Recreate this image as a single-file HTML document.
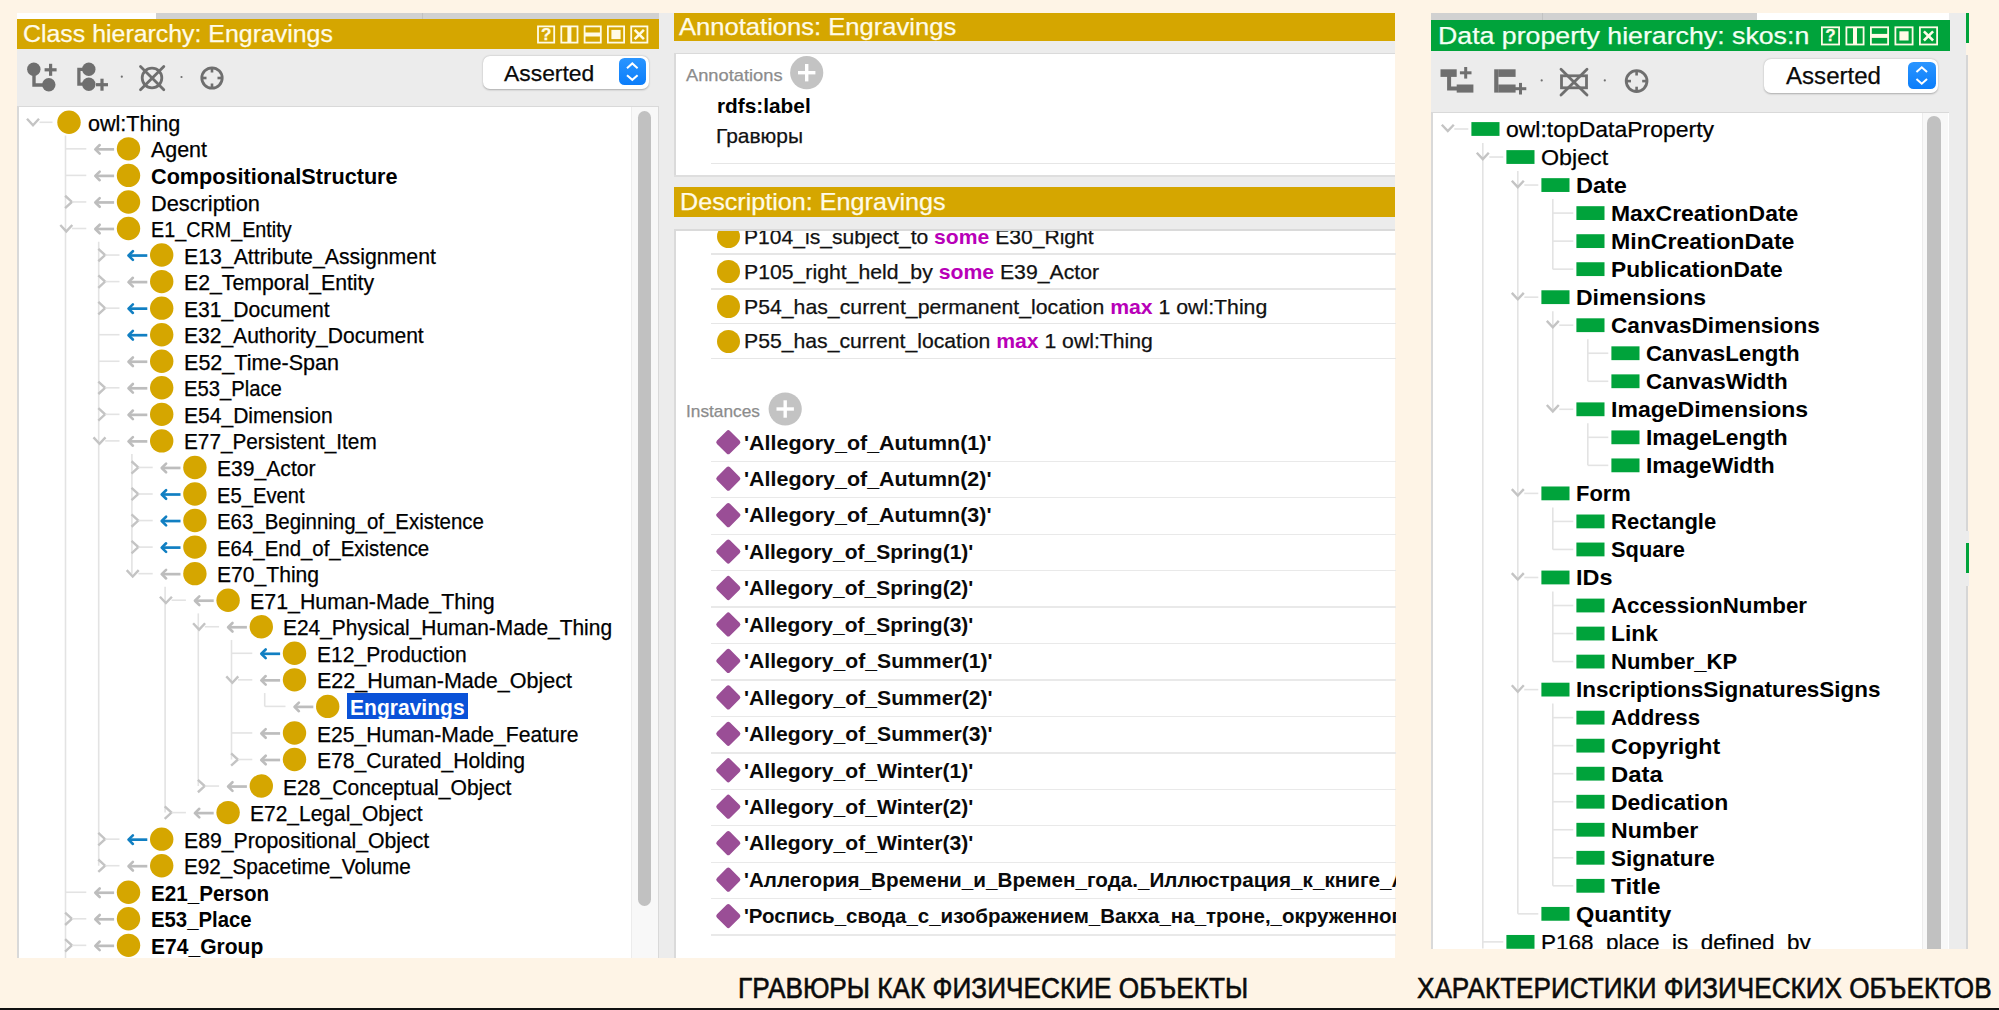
<!DOCTYPE html>
<html><head><meta charset="utf-8"><style>
html,body{margin:0;padding:0;}
body{width:1999px;height:1010px;overflow:hidden;background:#fef4e6;position:relative;font-family:"Liberation Sans",sans-serif;}
.a{position:absolute;}
.t{position:absolute;white-space:nowrap;transform-origin:0 0;line-height:1;-webkit-text-stroke:0.25px currentColor;}
svg{position:absolute;left:0;top:0;}
</style></head><body>
<div class="a" style="left:17.30px;top:13.00px;width:657.20px;height:945.00px;background:#ececec;"></div>
<div class="a" style="left:17.30px;top:13.00px;width:138.90px;height:6.30px;background:#ffffff;"></div>
<div class="a" style="left:156.20px;top:13.00px;width:502.40px;height:6.30px;background:#d1d1d1;"></div>
<div class="a" style="left:421.50px;top:13.00px;width:1.00px;height:6.30px;background:#c2c2c2;"></div>
<div class="a" style="left:17.30px;top:19.30px;width:641.30px;height:30.00px;background:#d5a600;"></div>
<div class="t" style="left:23.00px;top:21.85px;font-size:24.4px;color:#fffbe8;transform:scaleX(1.0206);">Class hierarchy: Engravings</div>
<div class="a" style="left:17.30px;top:106.00px;width:641.30px;height:852.00px;background:#d9d9d9;"></div>
<div class="a" style="left:18.70px;top:107.20px;width:639.50px;height:850.80px;background:#ffffff;"></div>
<div class="a" style="left:631.00px;top:107.20px;width:27.20px;height:850.80px;background:#f8f8f8;"></div>
<div class="a" style="left:631.00px;top:107.20px;width:1.00px;height:850.80px;background:#ececec;"></div>
<div class="a" style="left:637.60px;top:110.80px;width:13.10px;height:795.20px;background:#c1c1c1;border-radius:6.5px;"></div>
<div class="a" style="left:658.60px;top:12.75px;width:736.60px;height:945.25px;background:#ececec;"></div>
<div class="a" style="left:674.00px;top:12.75px;width:721.20px;height:28.00px;background:#d5a600;"></div>
<div class="t" style="left:678.75px;top:14.98px;font-size:24px;color:#fffbe8;transform:scaleX(1.0657);">Annotations: Engravings</div>
<div class="a" style="left:674.00px;top:53.00px;width:721.20px;height:123.30px;background:#dadada;"></div>
<div class="a" style="left:675.50px;top:54.30px;width:719.70px;height:122.00px;background:#ffffff;"></div>
<div class="a" style="left:674.00px;top:187.20px;width:721.20px;height:29.40px;background:#d5a600;"></div>
<div class="t" style="left:680.30px;top:189.88px;font-size:24px;color:#fffbe8;transform:scaleX(1.0480);">Description: Engravings</div>
<div class="a" style="left:674.00px;top:175.00px;width:721.20px;height:1.50px;background:#dedede;"></div>
<div class="a" style="left:674.00px;top:229.30px;width:721.20px;height:728.70px;background:#dadada;"></div>
<div class="a" style="left:675.50px;top:230.50px;width:719.70px;height:727.50px;background:#ffffff;"></div>
<div class="a" style="left:1431.20px;top:13.00px;width:535.30px;height:935.60px;background:#ececec;"></div>
<div class="a" style="left:1431.20px;top:13.20px;width:325.80px;height:6.90px;background:#d1d1d1;"></div>
<div class="a" style="left:1542.00px;top:13.20px;width:1.00px;height:6.90px;background:#c2c2c2;"></div>
<div class="a" style="left:1757.00px;top:13.20px;width:191.80px;height:6.90px;background:#ffffff;"></div>
<div class="a" style="left:1431.20px;top:20.10px;width:518.50px;height:31.40px;background:#00a33b;"></div>
<div class="t" style="left:1438.00px;top:23.83px;font-size:24.3px;color:#f4fff4;transform:scaleX(1.0997);">Data property hierarchy: skos:n</div>
<div class="a" style="left:1431.20px;top:112.00px;width:517.80px;height:836.60px;background:#d9d9d9;"></div>
<div class="a" style="left:1433.00px;top:113.20px;width:516.00px;height:835.40px;background:#ffffff;"></div>
<div class="a" style="left:1921.60px;top:113.20px;width:26.80px;height:835.40px;background:#f8f8f8;"></div>
<div class="a" style="left:1921.60px;top:113.20px;width:1.00px;height:835.40px;background:#ececec;"></div>
<div class="a" style="left:1927.30px;top:116.00px;width:14.20px;height:832.60px;background:#c1c1c1;border-radius:7px 7px 0 0;"></div>
<div class="a" style="left:1966.00px;top:55.00px;width:1.50px;height:893.60px;background:#d6d6d6;"></div>
<div class="a" style="left:1965.60px;top:13.00px;width:3.40px;height:30.00px;background:#00a33b;"></div>
<div class="a" style="left:1966.00px;top:530.70px;width:3.00px;height:55.50px;background:#ececec;"></div>
<div class="a" style="left:1966.00px;top:542.60px;width:3.00px;height:30.90px;background:#00a33b;"></div>
<div class="t" style="left:87.70px;top:112.85px;font-size:21.2px;color:#000;transform:scaleX(1.0173);">owl:Thing</div>
<div class="t" style="left:150.50px;top:139.40px;font-size:21.2px;color:#000;transform:scaleX(1.0109);">Agent</div>
<div class="t" style="left:150.50px;top:165.95px;font-size:21.2px;color:#000;font-weight:bold;-webkit-text-stroke:0;transform:scaleX(1.0218);">CompositionalStructure</div>
<div class="t" style="left:150.50px;top:192.50px;font-size:21.2px;color:#000;transform:scaleX(1.0279);">Description</div>
<div class="t" style="left:150.50px;top:219.05px;font-size:21.2px;color:#000;transform:scaleX(0.9330);">E1_CRM_Entity</div>
<div class="t" style="left:183.70px;top:245.60px;font-size:21.2px;color:#000;transform:scaleX(1.0040);">E13_Attribute_Assignment</div>
<div class="t" style="left:183.70px;top:272.15px;font-size:21.2px;color:#000;transform:scaleX(1.0026);">E2_Temporal_Entity</div>
<div class="t" style="left:183.70px;top:298.70px;font-size:21.2px;color:#000;transform:scaleX(0.9971);">E31_Document</div>
<div class="t" style="left:183.70px;top:325.25px;font-size:21.2px;color:#000;transform:scaleX(0.9927);">E32_Authority_Document</div>
<div class="t" style="left:183.70px;top:351.80px;font-size:21.2px;color:#000;transform:scaleX(1.0177);">E52_Time-Span</div>
<div class="t" style="left:183.70px;top:378.35px;font-size:21.2px;color:#000;transform:scaleX(0.9548);">E53_Place</div>
<div class="t" style="left:183.70px;top:404.90px;font-size:21.2px;color:#000;transform:scaleX(0.9936);">E54_Dimension</div>
<div class="t" style="left:183.70px;top:431.45px;font-size:21.2px;color:#000;transform:scaleX(0.9798);">E77_Persistent_Item</div>
<div class="t" style="left:216.90px;top:458.00px;font-size:21.2px;color:#000;transform:scaleX(0.9961);">E39_Actor</div>
<div class="t" style="left:216.90px;top:484.55px;font-size:21.2px;color:#000;transform:scaleX(0.9529);">E5_Event</div>
<div class="t" style="left:216.90px;top:511.10px;font-size:21.2px;color:#000;transform:scaleX(0.9640);">E63_Beginning_of_Existence</div>
<div class="t" style="left:216.90px;top:537.65px;font-size:21.2px;color:#000;transform:scaleX(0.9633);">E64_End_of_Existence</div>
<div class="t" style="left:216.90px;top:564.20px;font-size:21.2px;color:#000;transform:scaleX(0.9958);">E70_Thing</div>
<div class="t" style="left:250.10px;top:590.75px;font-size:21.2px;color:#000;transform:scaleX(1.0085);">E71_Human-Made_Thing</div>
<div class="t" style="left:283.30px;top:617.30px;font-size:21.2px;color:#000;transform:scaleX(0.9872);">E24_Physical_Human-Made_Thing</div>
<div class="t" style="left:316.50px;top:643.85px;font-size:21.2px;color:#000;transform:scaleX(0.9930);">E12_Production</div>
<div class="t" style="left:316.50px;top:670.40px;font-size:21.2px;color:#000;transform:scaleX(1.0164);">E22_Human-Made_Object</div>
<div class="a" style="left:346.60px;top:693.00px;width:121.60px;height:26.00px;background:#0a52d8;"></div>
<div class="t" style="left:349.50px;top:696.95px;font-size:21.2px;color:#ffffff;font-weight:bold;-webkit-text-stroke:0;transform:scaleX(0.9936);">Engravings</div>
<div class="t" style="left:316.50px;top:723.50px;font-size:21.2px;color:#000;transform:scaleX(0.9959);">E25_Human-Made_Feature</div>
<div class="t" style="left:316.50px;top:750.05px;font-size:21.2px;color:#000;transform:scaleX(0.9971);">E78_Curated_Holding</div>
<div class="t" style="left:283.30px;top:776.60px;font-size:21.2px;color:#000;transform:scaleX(0.9943);">E28_Conceptual_Object</div>
<div class="t" style="left:250.10px;top:803.15px;font-size:21.2px;color:#000;transform:scaleX(0.9901);">E72_Legal_Object</div>
<div class="t" style="left:183.70px;top:829.70px;font-size:21.2px;color:#000;transform:scaleX(1.0011);">E89_Propositional_Object</div>
<div class="t" style="left:183.70px;top:856.25px;font-size:21.2px;color:#000;transform:scaleX(0.9778);">E92_Spacetime_Volume</div>
<div class="t" style="left:150.50px;top:882.80px;font-size:21.2px;color:#000;font-weight:bold;-webkit-text-stroke:0;transform:scaleX(0.9738);">E21_Person</div>
<div class="t" style="left:150.50px;top:909.35px;font-size:21.2px;color:#000;font-weight:bold;-webkit-text-stroke:0;transform:scaleX(0.9589);">E53_Place</div>
<div class="t" style="left:150.50px;top:935.90px;font-size:21.2px;color:#000;font-weight:bold;-webkit-text-stroke:0;transform:scaleX(0.9930);">E74_Group</div>
<div class="t" style="left:1505.80px;top:118.85px;font-size:22.5px;color:#000;transform:scaleX(1.0204);">owl:topDataProperty</div>
<div class="t" style="left:1540.80px;top:146.88px;font-size:22.5px;color:#000;transform:scaleX(1.0319);">Object</div>
<div class="t" style="left:1575.80px;top:174.91px;font-size:22.5px;color:#000;font-weight:bold;-webkit-text-stroke:0;transform:scaleX(1.0438);">Date</div>
<div class="t" style="left:1610.80px;top:202.94px;font-size:22.5px;color:#000;font-weight:bold;-webkit-text-stroke:0;transform:scaleX(1.0191);">MaxCreationDate</div>
<div class="t" style="left:1610.80px;top:230.97px;font-size:22.5px;color:#000;font-weight:bold;-webkit-text-stroke:0;transform:scaleX(1.0260);">MinCreationDate</div>
<div class="t" style="left:1610.80px;top:259.00px;font-size:22.5px;color:#000;font-weight:bold;-webkit-text-stroke:0;transform:scaleX(1.0093);">PublicationDate</div>
<div class="t" style="left:1575.80px;top:287.03px;font-size:22.5px;color:#000;font-weight:bold;-webkit-text-stroke:0;transform:scaleX(1.0202);">Dimensions</div>
<div class="t" style="left:1610.80px;top:315.06px;font-size:22.5px;color:#000;font-weight:bold;-webkit-text-stroke:0;transform:scaleX(1.0060);">CanvasDimensions</div>
<div class="t" style="left:1645.80px;top:343.09px;font-size:22.5px;color:#000;font-weight:bold;-webkit-text-stroke:0;transform:scaleX(0.9902);">CanvasLength</div>
<div class="t" style="left:1645.80px;top:371.12px;font-size:22.5px;color:#000;font-weight:bold;-webkit-text-stroke:0;transform:scaleX(0.9957);">CanvasWidth</div>
<div class="t" style="left:1610.80px;top:399.15px;font-size:22.5px;color:#000;font-weight:bold;-webkit-text-stroke:0;transform:scaleX(1.0236);">ImageDimensions</div>
<div class="t" style="left:1645.80px;top:427.18px;font-size:22.5px;color:#000;font-weight:bold;-webkit-text-stroke:0;transform:scaleX(1.0121);">ImageLength</div>
<div class="t" style="left:1645.80px;top:455.21px;font-size:22.5px;color:#000;font-weight:bold;-webkit-text-stroke:0;transform:scaleX(1.0110);">ImageWidth</div>
<div class="t" style="left:1575.80px;top:483.24px;font-size:22.5px;color:#000;font-weight:bold;-webkit-text-stroke:0;transform:scaleX(0.9742);">Form</div>
<div class="t" style="left:1610.80px;top:511.27px;font-size:22.5px;color:#000;font-weight:bold;-webkit-text-stroke:0;transform:scaleX(0.9784);">Rectangle</div>
<div class="t" style="left:1610.80px;top:539.30px;font-size:22.5px;color:#000;font-weight:bold;-webkit-text-stroke:0;transform:scaleX(0.9702);">Square</div>
<div class="t" style="left:1575.80px;top:567.33px;font-size:22.5px;color:#000;font-weight:bold;-webkit-text-stroke:0;transform:scaleX(1.0396);">IDs</div>
<div class="t" style="left:1610.80px;top:595.36px;font-size:22.5px;color:#000;font-weight:bold;-webkit-text-stroke:0;transform:scaleX(0.9921);">AccessionNumber</div>
<div class="t" style="left:1610.80px;top:623.39px;font-size:22.5px;color:#000;font-weight:bold;-webkit-text-stroke:0;transform:scaleX(1.0119);">Link</div>
<div class="t" style="left:1610.80px;top:651.42px;font-size:22.5px;color:#000;font-weight:bold;-webkit-text-stroke:0;transform:scaleX(0.9792);">Number_KP</div>
<div class="t" style="left:1575.80px;top:679.45px;font-size:22.5px;color:#000;font-weight:bold;-webkit-text-stroke:0;transform:scaleX(0.9982);">InscriptionsSignaturesSigns</div>
<div class="t" style="left:1610.80px;top:707.48px;font-size:22.5px;color:#000;font-weight:bold;-webkit-text-stroke:0;transform:scaleX(0.9897);">Address</div>
<div class="t" style="left:1610.80px;top:735.51px;font-size:22.5px;color:#000;font-weight:bold;-webkit-text-stroke:0;transform:scaleX(1.0279);">Copyright</div>
<div class="t" style="left:1610.80px;top:763.54px;font-size:22.5px;color:#000;font-weight:bold;-webkit-text-stroke:0;transform:scaleX(1.0602);">Data</div>
<div class="t" style="left:1610.80px;top:791.57px;font-size:22.5px;color:#000;font-weight:bold;-webkit-text-stroke:0;transform:scaleX(1.0191);">Dedication</div>
<div class="t" style="left:1610.80px;top:819.60px;font-size:22.5px;color:#000;font-weight:bold;-webkit-text-stroke:0;transform:scaleX(1.0269);">Number</div>
<div class="t" style="left:1610.80px;top:847.63px;font-size:22.5px;color:#000;font-weight:bold;-webkit-text-stroke:0;transform:scaleX(1.0004);">Signature</div>
<div class="t" style="left:1610.80px;top:875.66px;font-size:22.5px;color:#000;font-weight:bold;-webkit-text-stroke:0;transform:scaleX(1.0798);">Title</div>
<div class="t" style="left:1575.80px;top:903.69px;font-size:22.5px;color:#000;font-weight:bold;-webkit-text-stroke:0;transform:scaleX(1.0434);">Quantity</div>
<div class="t" style="left:1540.80px;top:931.72px;font-size:22.5px;color:#000;transform:scaleX(0.9978);">P168_place_is_defined_by</div>
<div class="t" style="left:685.70px;top:66.91px;font-size:17px;color:#8c8c8c;transform:scaleX(1.0759);">Annotations</div>
<div class="t" style="left:716.60px;top:95.69px;font-size:20.8px;color:#000;font-weight:bold;-webkit-text-stroke:0;transform:scaleX(1.0009);">rdfs:label</div>
<div class="t" style="left:716.00px;top:125.02px;font-size:21px;color:#111;transform:scaleX(0.9974);">Гравюры</div>
<div class="a" style="left:711.00px;top:162.80px;width:684.20px;height:1.40px;background:#e6e6e6;"></div>
<div class="a" style="left:675.5px;top:230.5px;width:720px;height:727.5px;overflow:hidden">
<div class="a" style="left:41.30px;top:-5.70px;width:23.4px;height:23.4px;border-radius:50%;background:#d5a600"></div>
<div class="t" style="left:68.50px;top:-4.78px;font-size:21px;transform:scaleX(1.0052)"><span style="color:#111;">P104_is_subject_to </span><span style="color:#b800b8;font-weight:bold;-webkit-text-stroke:0;">some</span><span style="color:#111;"> E30_Right</span></div>
<div class="a" style="left:35.50px;top:22.80px;width:720px;height:1.4px;background:#e6e6e6"></div>
<div class="a" style="left:41.30px;top:29.20px;width:23.4px;height:23.4px;border-radius:50%;background:#d5a600"></div>
<div class="t" style="left:68.50px;top:30.12px;font-size:21px;transform:scaleX(1.0103)"><span style="color:#111;">P105_right_held_by </span><span style="color:#b800b8;font-weight:bold;-webkit-text-stroke:0;">some</span><span style="color:#111;"> E39_Actor</span></div>
<div class="a" style="left:35.50px;top:57.70px;width:720px;height:1.4px;background:#e6e6e6"></div>
<div class="a" style="left:41.30px;top:64.10px;width:23.4px;height:23.4px;border-radius:50%;background:#d5a600"></div>
<div class="t" style="left:68.50px;top:65.02px;font-size:21px;transform:scaleX(1.0117)"><span style="color:#111;">P54_has_current_permanent_location </span><span style="color:#b800b8;font-weight:bold;-webkit-text-stroke:0;">max</span><span style="color:#111;"> 1 owl:Thing</span></div>
<div class="a" style="left:35.50px;top:92.60px;width:720px;height:1.4px;background:#e6e6e6"></div>
<div class="a" style="left:41.30px;top:99.00px;width:23.4px;height:23.4px;border-radius:50%;background:#d5a600"></div>
<div class="t" style="left:68.50px;top:99.92px;font-size:21px;transform:scaleX(1.0092)"><span style="color:#111;">P55_has_current_location </span><span style="color:#b800b8;font-weight:bold;-webkit-text-stroke:0;">max</span><span style="color:#111;"> 1 owl:Thing</span></div>
<div class="a" style="left:35.50px;top:127.50px;width:720px;height:1.4px;background:#e6e6e6"></div>
</div>
<div class="t" style="left:686.30px;top:403.41px;font-size:17px;color:#8c8c8c;transform:scaleX(1.0170);">Instances</div>
<div class="a" style="left:675.5px;top:230.5px;width:720px;height:727.5px;overflow:hidden">
<div class="t" style="left:68.50px;top:201.02px;font-size:21px;font-weight:bold;-webkit-text-stroke:0;color:#0a0a0a;transform:scaleX(1.0221)">'Allegory_of_Autumn(1)'</div>
<div class="a" style="left:35.50px;top:230.10px;width:720px;height:1.4px;background:#e9e9e9"></div>
<div class="t" style="left:68.50px;top:237.47px;font-size:21px;font-weight:bold;-webkit-text-stroke:0;color:#0a0a0a;transform:scaleX(1.0221)">'Allegory_of_Autumn(2)'</div>
<div class="a" style="left:35.50px;top:266.55px;width:720px;height:1.4px;background:#e9e9e9"></div>
<div class="t" style="left:68.50px;top:273.92px;font-size:21px;font-weight:bold;-webkit-text-stroke:0;color:#0a0a0a;transform:scaleX(1.0221)">'Allegory_of_Autumn(3)'</div>
<div class="a" style="left:35.50px;top:303.00px;width:720px;height:1.4px;background:#e9e9e9"></div>
<div class="t" style="left:68.50px;top:310.37px;font-size:21px;font-weight:bold;-webkit-text-stroke:0;color:#0a0a0a;transform:scaleX(0.9998)">'Allegory_of_Spring(1)'</div>
<div class="a" style="left:35.50px;top:339.45px;width:720px;height:1.4px;background:#e9e9e9"></div>
<div class="t" style="left:68.50px;top:346.82px;font-size:21px;font-weight:bold;-webkit-text-stroke:0;color:#0a0a0a;transform:scaleX(0.9998)">'Allegory_of_Spring(2)'</div>
<div class="a" style="left:35.50px;top:375.90px;width:720px;height:1.4px;background:#e9e9e9"></div>
<div class="t" style="left:68.50px;top:383.27px;font-size:21px;font-weight:bold;-webkit-text-stroke:0;color:#0a0a0a;transform:scaleX(0.9998)">'Allegory_of_Spring(3)'</div>
<div class="a" style="left:35.50px;top:412.35px;width:720px;height:1.4px;background:#e9e9e9"></div>
<div class="t" style="left:68.50px;top:419.72px;font-size:21px;font-weight:bold;-webkit-text-stroke:0;color:#0a0a0a;transform:scaleX(1.0066)">'Allegory_of_Summer(1)'</div>
<div class="a" style="left:35.50px;top:448.80px;width:720px;height:1.4px;background:#e9e9e9"></div>
<div class="t" style="left:68.50px;top:456.17px;font-size:21px;font-weight:bold;-webkit-text-stroke:0;color:#0a0a0a;transform:scaleX(1.0066)">'Allegory_of_Summer(2)'</div>
<div class="a" style="left:35.50px;top:485.25px;width:720px;height:1.4px;background:#e9e9e9"></div>
<div class="t" style="left:68.50px;top:492.62px;font-size:21px;font-weight:bold;-webkit-text-stroke:0;color:#0a0a0a;transform:scaleX(1.0066)">'Allegory_of_Summer(3)'</div>
<div class="a" style="left:35.50px;top:521.70px;width:720px;height:1.4px;background:#e9e9e9"></div>
<div class="t" style="left:68.50px;top:529.07px;font-size:21px;font-weight:bold;-webkit-text-stroke:0;color:#0a0a0a;transform:scaleX(1.0058)">'Allegory_of_Winter(1)'</div>
<div class="a" style="left:35.50px;top:558.15px;width:720px;height:1.4px;background:#e9e9e9"></div>
<div class="t" style="left:68.50px;top:565.52px;font-size:21px;font-weight:bold;-webkit-text-stroke:0;color:#0a0a0a;transform:scaleX(1.0058)">'Allegory_of_Winter(2)'</div>
<div class="a" style="left:35.50px;top:594.60px;width:720px;height:1.4px;background:#e9e9e9"></div>
<div class="t" style="left:68.50px;top:601.97px;font-size:21px;font-weight:bold;-webkit-text-stroke:0;color:#0a0a0a;transform:scaleX(1.0058)">'Allegory_of_Winter(3)'</div>
<div class="a" style="left:35.50px;top:631.05px;width:720px;height:1.4px;background:#e9e9e9"></div>
<div class="t" style="left:68.50px;top:638.42px;font-size:21px;font-weight:bold;-webkit-text-stroke:0;color:#0a0a0a;transform:scaleX(0.9837)">'Аллегория_Времени_и_Времен_года._Иллюстрация_к_книге_Алле</div>
<div class="a" style="left:35.50px;top:667.50px;width:720px;height:1.4px;background:#e9e9e9"></div>
<div class="t" style="left:68.50px;top:674.87px;font-size:21px;font-weight:bold;-webkit-text-stroke:0;color:#0a0a0a;transform:scaleX(0.9757)">'Роспись_свода_с_изображением_Вакха_на_троне,_окруженного</div>
<div class="a" style="left:35.50px;top:703.95px;width:720px;height:1.4px;background:#e9e9e9"></div>
</div>
<div class="a" style="left:483.4px;top:56.1px;width:165.60000000000002px;height:33.300000000000004px;background:#fff;border-radius:7px;box-shadow:0 0.5px 2px rgba(0,0,0,0.28)"></div>
<div class="a" style="left:619px;top:58.3px;width:26.600000000000023px;height:26.700000000000003px;background:linear-gradient(#2a95ff,#0b7dfa);border-radius:5.5px"></div>
<div class="t" style="left:503.50px;top:62.75px;font-size:22.5px;color:#0a0a0a;transform:scaleX(1.0170);">Asserted</div>
<div class="a" style="left:1764px;top:59.4px;width:174.4000000000001px;height:33.9px;background:#fff;border-radius:7px;box-shadow:0 0.5px 2px rgba(0,0,0,0.28)"></div>
<div class="a" style="left:1908px;top:61.7px;width:27.5px;height:27.5px;background:linear-gradient(#2a95ff,#0b7dfa);border-radius:5.5px"></div>
<div class="t" style="left:1785.50px;top:65.01px;font-size:23.5px;color:#0a0a0a;transform:scaleX(1.0244);">Asserted</div>
<div class="t" style="left:540.90px;top:25.90px;font-size:17px;font-weight:bold;color:#fffbe6">?</div>
<div class="t" style="left:1825.30px;top:27.30px;font-size:17px;font-weight:bold;color:#fffbe6">?</div>
<svg width="1999" height="1010" viewBox="0 0 1999 1010">
<line x1="65.50" y1="135.50" x2="65.50" y2="958.00" stroke="#e3e3e3" stroke-width="1.6"/><line x1="98.70" y1="241.70" x2="98.70" y2="865.70" stroke="#e3e3e3" stroke-width="1.6"/><line x1="131.90" y1="454.10" x2="131.90" y2="573.65" stroke="#e3e3e3" stroke-width="1.6"/><line x1="165.10" y1="586.85" x2="165.10" y2="812.60" stroke="#e3e3e3" stroke-width="1.6"/><line x1="198.30" y1="613.40" x2="198.30" y2="786.05" stroke="#e3e3e3" stroke-width="1.6"/><line x1="231.50" y1="639.95" x2="231.50" y2="759.50" stroke="#e3e3e3" stroke-width="1.6"/><line x1="264.70" y1="693.05" x2="264.70" y2="706.40" stroke="#e3e3e3" stroke-width="1.6"/><polyline points="27.00,118.80 33.00,125.20 39.00,118.80" fill="none" stroke="#c4c4c4" stroke-width="2.4"/><line x1="39.50" y1="122.30" x2="52.50" y2="122.30" stroke="#e3e3e3" stroke-width="1.6"/><circle cx="69.00" cy="122.30" r="11.7" fill="#d5a600"/><line x1="65.50" y1="148.85" x2="86.30" y2="148.85" stroke="#e3e3e3" stroke-width="1.6"/><line x1="95.60" y1="149.35" x2="114.10" y2="149.35" stroke="#bdbdbd" stroke-width="2.7"/><polyline points="99.70,145.05 95.30,149.35 99.70,153.65" fill="none" stroke="#bdbdbd" stroke-width="2.6" stroke-linecap="round" stroke-linejoin="round"/><circle cx="128.50" cy="148.85" r="11.7" fill="#d5a600"/><line x1="65.50" y1="175.40" x2="86.30" y2="175.40" stroke="#e3e3e3" stroke-width="1.6"/><line x1="95.60" y1="175.90" x2="114.10" y2="175.90" stroke="#bdbdbd" stroke-width="2.7"/><polyline points="99.70,171.60 95.30,175.90 99.70,180.20" fill="none" stroke="#bdbdbd" stroke-width="2.6" stroke-linecap="round" stroke-linejoin="round"/><circle cx="128.50" cy="175.40" r="11.7" fill="#d5a600"/><polyline points="65.10,195.75 71.90,201.95 65.10,208.15" fill="none" stroke="#c4c4c4" stroke-width="2.4"/><line x1="72.00" y1="201.95" x2="86.30" y2="201.95" stroke="#e3e3e3" stroke-width="1.6"/><line x1="95.60" y1="202.45" x2="114.10" y2="202.45" stroke="#bdbdbd" stroke-width="2.7"/><polyline points="99.70,198.15 95.30,202.45 99.70,206.75" fill="none" stroke="#bdbdbd" stroke-width="2.6" stroke-linecap="round" stroke-linejoin="round"/><circle cx="128.50" cy="201.95" r="11.7" fill="#d5a600"/><polyline points="60.30,225.00 66.30,231.40 72.30,225.00" fill="none" stroke="#c4c4c4" stroke-width="2.4"/><line x1="72.00" y1="228.50" x2="86.30" y2="228.50" stroke="#e3e3e3" stroke-width="1.6"/><line x1="95.60" y1="229.00" x2="114.10" y2="229.00" stroke="#bdbdbd" stroke-width="2.7"/><polyline points="99.70,224.70 95.30,229.00 99.70,233.30" fill="none" stroke="#bdbdbd" stroke-width="2.6" stroke-linecap="round" stroke-linejoin="round"/><circle cx="128.50" cy="228.50" r="11.7" fill="#d5a600"/><polyline points="98.30,248.85 105.10,255.05 98.30,261.25" fill="none" stroke="#c4c4c4" stroke-width="2.4"/><line x1="105.20" y1="255.05" x2="119.50" y2="255.05" stroke="#e3e3e3" stroke-width="1.6"/><line x1="128.80" y1="255.55" x2="147.30" y2="255.55" stroke="#117fc2" stroke-width="2.7"/><polyline points="132.90,251.25 128.50,255.55 132.90,259.85" fill="none" stroke="#117fc2" stroke-width="2.6" stroke-linecap="round" stroke-linejoin="round"/><circle cx="161.70" cy="255.05" r="11.7" fill="#d5a600"/><polyline points="98.30,275.40 105.10,281.60 98.30,287.80" fill="none" stroke="#c4c4c4" stroke-width="2.4"/><line x1="105.20" y1="281.60" x2="119.50" y2="281.60" stroke="#e3e3e3" stroke-width="1.6"/><line x1="128.80" y1="282.10" x2="147.30" y2="282.10" stroke="#bdbdbd" stroke-width="2.7"/><polyline points="132.90,277.80 128.50,282.10 132.90,286.40" fill="none" stroke="#bdbdbd" stroke-width="2.6" stroke-linecap="round" stroke-linejoin="round"/><circle cx="161.70" cy="281.60" r="11.7" fill="#d5a600"/><polyline points="98.30,301.95 105.10,308.15 98.30,314.35" fill="none" stroke="#c4c4c4" stroke-width="2.4"/><line x1="105.20" y1="308.15" x2="119.50" y2="308.15" stroke="#e3e3e3" stroke-width="1.6"/><line x1="128.80" y1="308.65" x2="147.30" y2="308.65" stroke="#117fc2" stroke-width="2.7"/><polyline points="132.90,304.35 128.50,308.65 132.90,312.95" fill="none" stroke="#117fc2" stroke-width="2.6" stroke-linecap="round" stroke-linejoin="round"/><circle cx="161.70" cy="308.15" r="11.7" fill="#d5a600"/><line x1="98.70" y1="334.70" x2="119.50" y2="334.70" stroke="#e3e3e3" stroke-width="1.6"/><line x1="128.80" y1="335.20" x2="147.30" y2="335.20" stroke="#117fc2" stroke-width="2.7"/><polyline points="132.90,330.90 128.50,335.20 132.90,339.50" fill="none" stroke="#117fc2" stroke-width="2.6" stroke-linecap="round" stroke-linejoin="round"/><circle cx="161.70" cy="334.70" r="11.7" fill="#d5a600"/><line x1="98.70" y1="361.25" x2="119.50" y2="361.25" stroke="#e3e3e3" stroke-width="1.6"/><line x1="128.80" y1="361.75" x2="147.30" y2="361.75" stroke="#bdbdbd" stroke-width="2.7"/><polyline points="132.90,357.45 128.50,361.75 132.90,366.05" fill="none" stroke="#bdbdbd" stroke-width="2.6" stroke-linecap="round" stroke-linejoin="round"/><circle cx="161.70" cy="361.25" r="11.7" fill="#d5a600"/><polyline points="98.30,381.60 105.10,387.80 98.30,394.00" fill="none" stroke="#c4c4c4" stroke-width="2.4"/><line x1="105.20" y1="387.80" x2="119.50" y2="387.80" stroke="#e3e3e3" stroke-width="1.6"/><line x1="128.80" y1="388.30" x2="147.30" y2="388.30" stroke="#bdbdbd" stroke-width="2.7"/><polyline points="132.90,384.00 128.50,388.30 132.90,392.60" fill="none" stroke="#bdbdbd" stroke-width="2.6" stroke-linecap="round" stroke-linejoin="round"/><circle cx="161.70" cy="387.80" r="11.7" fill="#d5a600"/><polyline points="98.30,408.15 105.10,414.35 98.30,420.55" fill="none" stroke="#c4c4c4" stroke-width="2.4"/><line x1="105.20" y1="414.35" x2="119.50" y2="414.35" stroke="#e3e3e3" stroke-width="1.6"/><line x1="128.80" y1="414.85" x2="147.30" y2="414.85" stroke="#bdbdbd" stroke-width="2.7"/><polyline points="132.90,410.55 128.50,414.85 132.90,419.15" fill="none" stroke="#bdbdbd" stroke-width="2.6" stroke-linecap="round" stroke-linejoin="round"/><circle cx="161.70" cy="414.35" r="11.7" fill="#d5a600"/><polyline points="93.50,437.40 99.50,443.80 105.50,437.40" fill="none" stroke="#c4c4c4" stroke-width="2.4"/><line x1="105.20" y1="440.90" x2="119.50" y2="440.90" stroke="#e3e3e3" stroke-width="1.6"/><line x1="128.80" y1="441.40" x2="147.30" y2="441.40" stroke="#bdbdbd" stroke-width="2.7"/><polyline points="132.90,437.10 128.50,441.40 132.90,445.70" fill="none" stroke="#bdbdbd" stroke-width="2.6" stroke-linecap="round" stroke-linejoin="round"/><circle cx="161.70" cy="440.90" r="11.7" fill="#d5a600"/><polyline points="131.50,461.25 138.30,467.45 131.50,473.65" fill="none" stroke="#c4c4c4" stroke-width="2.4"/><line x1="138.40" y1="467.45" x2="152.70" y2="467.45" stroke="#e3e3e3" stroke-width="1.6"/><line x1="162.00" y1="467.95" x2="180.50" y2="467.95" stroke="#bdbdbd" stroke-width="2.7"/><polyline points="166.10,463.65 161.70,467.95 166.10,472.25" fill="none" stroke="#bdbdbd" stroke-width="2.6" stroke-linecap="round" stroke-linejoin="round"/><circle cx="194.90" cy="467.45" r="11.7" fill="#d5a600"/><polyline points="131.50,487.80 138.30,494.00 131.50,500.20" fill="none" stroke="#c4c4c4" stroke-width="2.4"/><line x1="138.40" y1="494.00" x2="152.70" y2="494.00" stroke="#e3e3e3" stroke-width="1.6"/><line x1="162.00" y1="494.50" x2="180.50" y2="494.50" stroke="#117fc2" stroke-width="2.7"/><polyline points="166.10,490.20 161.70,494.50 166.10,498.80" fill="none" stroke="#117fc2" stroke-width="2.6" stroke-linecap="round" stroke-linejoin="round"/><circle cx="194.90" cy="494.00" r="11.7" fill="#d5a600"/><polyline points="131.50,514.35 138.30,520.55 131.50,526.75" fill="none" stroke="#c4c4c4" stroke-width="2.4"/><line x1="138.40" y1="520.55" x2="152.70" y2="520.55" stroke="#e3e3e3" stroke-width="1.6"/><line x1="162.00" y1="521.05" x2="180.50" y2="521.05" stroke="#117fc2" stroke-width="2.7"/><polyline points="166.10,516.75 161.70,521.05 166.10,525.35" fill="none" stroke="#117fc2" stroke-width="2.6" stroke-linecap="round" stroke-linejoin="round"/><circle cx="194.90" cy="520.55" r="11.7" fill="#d5a600"/><polyline points="131.50,540.90 138.30,547.10 131.50,553.30" fill="none" stroke="#c4c4c4" stroke-width="2.4"/><line x1="138.40" y1="547.10" x2="152.70" y2="547.10" stroke="#e3e3e3" stroke-width="1.6"/><line x1="162.00" y1="547.60" x2="180.50" y2="547.60" stroke="#117fc2" stroke-width="2.7"/><polyline points="166.10,543.30 161.70,547.60 166.10,551.90" fill="none" stroke="#117fc2" stroke-width="2.6" stroke-linecap="round" stroke-linejoin="round"/><circle cx="194.90" cy="547.10" r="11.7" fill="#d5a600"/><polyline points="126.70,570.15 132.70,576.55 138.70,570.15" fill="none" stroke="#c4c4c4" stroke-width="2.4"/><line x1="138.40" y1="573.65" x2="152.70" y2="573.65" stroke="#e3e3e3" stroke-width="1.6"/><line x1="162.00" y1="574.15" x2="180.50" y2="574.15" stroke="#bdbdbd" stroke-width="2.7"/><polyline points="166.10,569.85 161.70,574.15 166.10,578.45" fill="none" stroke="#bdbdbd" stroke-width="2.6" stroke-linecap="round" stroke-linejoin="round"/><circle cx="194.90" cy="573.65" r="11.7" fill="#d5a600"/><polyline points="159.90,596.70 165.90,603.10 171.90,596.70" fill="none" stroke="#c4c4c4" stroke-width="2.4"/><line x1="171.60" y1="600.20" x2="185.90" y2="600.20" stroke="#e3e3e3" stroke-width="1.6"/><line x1="195.20" y1="600.70" x2="213.70" y2="600.70" stroke="#bdbdbd" stroke-width="2.7"/><polyline points="199.30,596.40 194.90,600.70 199.30,605.00" fill="none" stroke="#bdbdbd" stroke-width="2.6" stroke-linecap="round" stroke-linejoin="round"/><circle cx="228.10" cy="600.20" r="11.7" fill="#d5a600"/><polyline points="193.10,623.25 199.10,629.65 205.10,623.25" fill="none" stroke="#c4c4c4" stroke-width="2.4"/><line x1="204.80" y1="626.75" x2="219.10" y2="626.75" stroke="#e3e3e3" stroke-width="1.6"/><line x1="228.40" y1="627.25" x2="246.90" y2="627.25" stroke="#bdbdbd" stroke-width="2.7"/><polyline points="232.50,622.95 228.10,627.25 232.50,631.55" fill="none" stroke="#bdbdbd" stroke-width="2.6" stroke-linecap="round" stroke-linejoin="round"/><circle cx="261.30" cy="626.75" r="11.7" fill="#d5a600"/><line x1="231.50" y1="653.30" x2="252.30" y2="653.30" stroke="#e3e3e3" stroke-width="1.6"/><line x1="261.60" y1="653.80" x2="280.10" y2="653.80" stroke="#117fc2" stroke-width="2.7"/><polyline points="265.70,649.50 261.30,653.80 265.70,658.10" fill="none" stroke="#117fc2" stroke-width="2.6" stroke-linecap="round" stroke-linejoin="round"/><circle cx="294.50" cy="653.30" r="11.7" fill="#d5a600"/><polyline points="226.30,676.35 232.30,682.75 238.30,676.35" fill="none" stroke="#c4c4c4" stroke-width="2.4"/><line x1="238.00" y1="679.85" x2="252.30" y2="679.85" stroke="#e3e3e3" stroke-width="1.6"/><line x1="261.60" y1="680.35" x2="280.10" y2="680.35" stroke="#bdbdbd" stroke-width="2.7"/><polyline points="265.70,676.05 261.30,680.35 265.70,684.65" fill="none" stroke="#bdbdbd" stroke-width="2.6" stroke-linecap="round" stroke-linejoin="round"/><circle cx="294.50" cy="679.85" r="11.7" fill="#d5a600"/><line x1="264.70" y1="706.40" x2="285.50" y2="706.40" stroke="#e3e3e3" stroke-width="1.6"/><line x1="294.80" y1="706.90" x2="313.30" y2="706.90" stroke="#bdbdbd" stroke-width="2.7"/><polyline points="298.90,702.60 294.50,706.90 298.90,711.20" fill="none" stroke="#bdbdbd" stroke-width="2.6" stroke-linecap="round" stroke-linejoin="round"/><circle cx="327.70" cy="706.40" r="11.7" fill="#d5a600"/><line x1="231.50" y1="732.95" x2="252.30" y2="732.95" stroke="#e3e3e3" stroke-width="1.6"/><line x1="261.60" y1="733.45" x2="280.10" y2="733.45" stroke="#bdbdbd" stroke-width="2.7"/><polyline points="265.70,729.15 261.30,733.45 265.70,737.75" fill="none" stroke="#bdbdbd" stroke-width="2.6" stroke-linecap="round" stroke-linejoin="round"/><circle cx="294.50" cy="732.95" r="11.7" fill="#d5a600"/><polyline points="231.10,753.30 237.90,759.50 231.10,765.70" fill="none" stroke="#c4c4c4" stroke-width="2.4"/><line x1="238.00" y1="759.50" x2="252.30" y2="759.50" stroke="#e3e3e3" stroke-width="1.6"/><line x1="261.60" y1="760.00" x2="280.10" y2="760.00" stroke="#bdbdbd" stroke-width="2.7"/><polyline points="265.70,755.70 261.30,760.00 265.70,764.30" fill="none" stroke="#bdbdbd" stroke-width="2.6" stroke-linecap="round" stroke-linejoin="round"/><circle cx="294.50" cy="759.50" r="11.7" fill="#d5a600"/><polyline points="197.90,779.85 204.70,786.05 197.90,792.25" fill="none" stroke="#c4c4c4" stroke-width="2.4"/><line x1="204.80" y1="786.05" x2="219.10" y2="786.05" stroke="#e3e3e3" stroke-width="1.6"/><line x1="228.40" y1="786.55" x2="246.90" y2="786.55" stroke="#bdbdbd" stroke-width="2.7"/><polyline points="232.50,782.25 228.10,786.55 232.50,790.85" fill="none" stroke="#bdbdbd" stroke-width="2.6" stroke-linecap="round" stroke-linejoin="round"/><circle cx="261.30" cy="786.05" r="11.7" fill="#d5a600"/><polyline points="164.70,806.40 171.50,812.60 164.70,818.80" fill="none" stroke="#c4c4c4" stroke-width="2.4"/><line x1="171.60" y1="812.60" x2="185.90" y2="812.60" stroke="#e3e3e3" stroke-width="1.6"/><line x1="195.20" y1="813.10" x2="213.70" y2="813.10" stroke="#bdbdbd" stroke-width="2.7"/><polyline points="199.30,808.80 194.90,813.10 199.30,817.40" fill="none" stroke="#bdbdbd" stroke-width="2.6" stroke-linecap="round" stroke-linejoin="round"/><circle cx="228.10" cy="812.60" r="11.7" fill="#d5a600"/><polyline points="98.30,832.95 105.10,839.15 98.30,845.35" fill="none" stroke="#c4c4c4" stroke-width="2.4"/><line x1="105.20" y1="839.15" x2="119.50" y2="839.15" stroke="#e3e3e3" stroke-width="1.6"/><line x1="128.80" y1="839.65" x2="147.30" y2="839.65" stroke="#117fc2" stroke-width="2.7"/><polyline points="132.90,835.35 128.50,839.65 132.90,843.95" fill="none" stroke="#117fc2" stroke-width="2.6" stroke-linecap="round" stroke-linejoin="round"/><circle cx="161.70" cy="839.15" r="11.7" fill="#d5a600"/><polyline points="98.30,859.50 105.10,865.70 98.30,871.90" fill="none" stroke="#c4c4c4" stroke-width="2.4"/><line x1="105.20" y1="865.70" x2="119.50" y2="865.70" stroke="#e3e3e3" stroke-width="1.6"/><line x1="128.80" y1="866.20" x2="147.30" y2="866.20" stroke="#bdbdbd" stroke-width="2.7"/><polyline points="132.90,861.90 128.50,866.20 132.90,870.50" fill="none" stroke="#bdbdbd" stroke-width="2.6" stroke-linecap="round" stroke-linejoin="round"/><circle cx="161.70" cy="865.70" r="11.7" fill="#d5a600"/><line x1="65.50" y1="892.25" x2="86.30" y2="892.25" stroke="#e3e3e3" stroke-width="1.6"/><line x1="95.60" y1="892.75" x2="114.10" y2="892.75" stroke="#bdbdbd" stroke-width="2.7"/><polyline points="99.70,888.45 95.30,892.75 99.70,897.05" fill="none" stroke="#bdbdbd" stroke-width="2.6" stroke-linecap="round" stroke-linejoin="round"/><circle cx="128.50" cy="892.25" r="11.7" fill="#d5a600"/><polyline points="65.10,912.60 71.90,918.80 65.10,925.00" fill="none" stroke="#c4c4c4" stroke-width="2.4"/><line x1="72.00" y1="918.80" x2="86.30" y2="918.80" stroke="#e3e3e3" stroke-width="1.6"/><line x1="95.60" y1="919.30" x2="114.10" y2="919.30" stroke="#bdbdbd" stroke-width="2.7"/><polyline points="99.70,915.00 95.30,919.30 99.70,923.60" fill="none" stroke="#bdbdbd" stroke-width="2.6" stroke-linecap="round" stroke-linejoin="round"/><circle cx="128.50" cy="918.80" r="11.7" fill="#d5a600"/><polyline points="65.10,939.15 71.90,945.35 65.10,951.55" fill="none" stroke="#c4c4c4" stroke-width="2.4"/><line x1="72.00" y1="945.35" x2="86.30" y2="945.35" stroke="#e3e3e3" stroke-width="1.6"/><line x1="95.60" y1="945.85" x2="114.10" y2="945.85" stroke="#bdbdbd" stroke-width="2.7"/><polyline points="99.70,941.55 95.30,945.85 99.70,950.15" fill="none" stroke="#bdbdbd" stroke-width="2.6" stroke-linecap="round" stroke-linejoin="round"/><circle cx="128.50" cy="945.35" r="11.7" fill="#d5a600"/><line x1="1482.80" y1="143.00" x2="1482.80" y2="948.60" stroke="#e3e3e3" stroke-width="1.6"/><line x1="1517.80" y1="171.03" x2="1517.80" y2="913.84" stroke="#e3e3e3" stroke-width="1.6"/><line x1="1552.80" y1="199.06" x2="1552.80" y2="269.15" stroke="#e3e3e3" stroke-width="1.6"/><line x1="1552.80" y1="311.18" x2="1552.80" y2="409.30" stroke="#e3e3e3" stroke-width="1.6"/><line x1="1587.80" y1="339.21" x2="1587.80" y2="381.27" stroke="#e3e3e3" stroke-width="1.6"/><line x1="1587.80" y1="423.30" x2="1587.80" y2="465.36" stroke="#e3e3e3" stroke-width="1.6"/><line x1="1552.80" y1="507.39" x2="1552.80" y2="549.45" stroke="#e3e3e3" stroke-width="1.6"/><line x1="1552.80" y1="591.48" x2="1552.80" y2="661.57" stroke="#e3e3e3" stroke-width="1.6"/><line x1="1552.80" y1="703.60" x2="1552.80" y2="885.81" stroke="#e3e3e3" stroke-width="1.6"/><polyline points="1441.80,124.70 1447.80,131.10 1453.80,124.70" fill="none" stroke="#c4c4c4" stroke-width="2.4"/><line x1="1454.30" y1="129.00" x2="1468.30" y2="129.00" stroke="#e3e3e3" stroke-width="1.6"/><rect x="1471.40" y="122.10" width="28.1" height="13.8" fill="#00a33b"/><polyline points="1476.80,152.73 1482.80,159.13 1488.80,152.73" fill="none" stroke="#c4c4c4" stroke-width="2.4"/><line x1="1489.30" y1="157.03" x2="1503.30" y2="157.03" stroke="#e3e3e3" stroke-width="1.6"/><rect x="1506.40" y="150.13" width="28.1" height="13.8" fill="#00a33b"/><polyline points="1511.80,180.76 1517.80,187.16 1523.80,180.76" fill="none" stroke="#c4c4c4" stroke-width="2.4"/><line x1="1524.30" y1="185.06" x2="1538.30" y2="185.06" stroke="#e3e3e3" stroke-width="1.6"/><rect x="1541.40" y="178.16" width="28.1" height="13.8" fill="#00a33b"/><line x1="1552.80" y1="213.09" x2="1573.30" y2="213.09" stroke="#e3e3e3" stroke-width="1.6"/><rect x="1576.40" y="206.19" width="28.1" height="13.8" fill="#00a33b"/><line x1="1552.80" y1="241.12" x2="1573.30" y2="241.12" stroke="#e3e3e3" stroke-width="1.6"/><rect x="1576.40" y="234.22" width="28.1" height="13.8" fill="#00a33b"/><line x1="1552.80" y1="269.15" x2="1573.30" y2="269.15" stroke="#e3e3e3" stroke-width="1.6"/><rect x="1576.40" y="262.25" width="28.1" height="13.8" fill="#00a33b"/><polyline points="1511.80,292.88 1517.80,299.28 1523.80,292.88" fill="none" stroke="#c4c4c4" stroke-width="2.4"/><line x1="1524.30" y1="297.18" x2="1538.30" y2="297.18" stroke="#e3e3e3" stroke-width="1.6"/><rect x="1541.40" y="290.28" width="28.1" height="13.8" fill="#00a33b"/><polyline points="1546.80,320.91 1552.80,327.31 1558.80,320.91" fill="none" stroke="#c4c4c4" stroke-width="2.4"/><line x1="1559.30" y1="325.21" x2="1573.30" y2="325.21" stroke="#e3e3e3" stroke-width="1.6"/><rect x="1576.40" y="318.31" width="28.1" height="13.8" fill="#00a33b"/><line x1="1587.80" y1="353.24" x2="1608.30" y2="353.24" stroke="#e3e3e3" stroke-width="1.6"/><rect x="1611.40" y="346.34" width="28.1" height="13.8" fill="#00a33b"/><line x1="1587.80" y1="381.27" x2="1608.30" y2="381.27" stroke="#e3e3e3" stroke-width="1.6"/><rect x="1611.40" y="374.37" width="28.1" height="13.8" fill="#00a33b"/><polyline points="1546.80,405.00 1552.80,411.40 1558.80,405.00" fill="none" stroke="#c4c4c4" stroke-width="2.4"/><line x1="1559.30" y1="409.30" x2="1573.30" y2="409.30" stroke="#e3e3e3" stroke-width="1.6"/><rect x="1576.40" y="402.40" width="28.1" height="13.8" fill="#00a33b"/><line x1="1587.80" y1="437.33" x2="1608.30" y2="437.33" stroke="#e3e3e3" stroke-width="1.6"/><rect x="1611.40" y="430.43" width="28.1" height="13.8" fill="#00a33b"/><line x1="1587.80" y1="465.36" x2="1608.30" y2="465.36" stroke="#e3e3e3" stroke-width="1.6"/><rect x="1611.40" y="458.46" width="28.1" height="13.8" fill="#00a33b"/><polyline points="1511.80,489.09 1517.80,495.49 1523.80,489.09" fill="none" stroke="#c4c4c4" stroke-width="2.4"/><line x1="1524.30" y1="493.39" x2="1538.30" y2="493.39" stroke="#e3e3e3" stroke-width="1.6"/><rect x="1541.40" y="486.49" width="28.1" height="13.8" fill="#00a33b"/><line x1="1552.80" y1="521.42" x2="1573.30" y2="521.42" stroke="#e3e3e3" stroke-width="1.6"/><rect x="1576.40" y="514.52" width="28.1" height="13.8" fill="#00a33b"/><line x1="1552.80" y1="549.45" x2="1573.30" y2="549.45" stroke="#e3e3e3" stroke-width="1.6"/><rect x="1576.40" y="542.55" width="28.1" height="13.8" fill="#00a33b"/><polyline points="1511.80,573.18 1517.80,579.58 1523.80,573.18" fill="none" stroke="#c4c4c4" stroke-width="2.4"/><line x1="1524.30" y1="577.48" x2="1538.30" y2="577.48" stroke="#e3e3e3" stroke-width="1.6"/><rect x="1541.40" y="570.58" width="28.1" height="13.8" fill="#00a33b"/><line x1="1552.80" y1="605.51" x2="1573.30" y2="605.51" stroke="#e3e3e3" stroke-width="1.6"/><rect x="1576.40" y="598.61" width="28.1" height="13.8" fill="#00a33b"/><line x1="1552.80" y1="633.54" x2="1573.30" y2="633.54" stroke="#e3e3e3" stroke-width="1.6"/><rect x="1576.40" y="626.64" width="28.1" height="13.8" fill="#00a33b"/><line x1="1552.80" y1="661.57" x2="1573.30" y2="661.57" stroke="#e3e3e3" stroke-width="1.6"/><rect x="1576.40" y="654.67" width="28.1" height="13.8" fill="#00a33b"/><polyline points="1511.80,685.30 1517.80,691.70 1523.80,685.30" fill="none" stroke="#c4c4c4" stroke-width="2.4"/><line x1="1524.30" y1="689.60" x2="1538.30" y2="689.60" stroke="#e3e3e3" stroke-width="1.6"/><rect x="1541.40" y="682.70" width="28.1" height="13.8" fill="#00a33b"/><line x1="1552.80" y1="717.63" x2="1573.30" y2="717.63" stroke="#e3e3e3" stroke-width="1.6"/><rect x="1576.40" y="710.73" width="28.1" height="13.8" fill="#00a33b"/><line x1="1552.80" y1="745.66" x2="1573.30" y2="745.66" stroke="#e3e3e3" stroke-width="1.6"/><rect x="1576.40" y="738.76" width="28.1" height="13.8" fill="#00a33b"/><line x1="1552.80" y1="773.69" x2="1573.30" y2="773.69" stroke="#e3e3e3" stroke-width="1.6"/><rect x="1576.40" y="766.79" width="28.1" height="13.8" fill="#00a33b"/><line x1="1552.80" y1="801.72" x2="1573.30" y2="801.72" stroke="#e3e3e3" stroke-width="1.6"/><rect x="1576.40" y="794.82" width="28.1" height="13.8" fill="#00a33b"/><line x1="1552.80" y1="829.75" x2="1573.30" y2="829.75" stroke="#e3e3e3" stroke-width="1.6"/><rect x="1576.40" y="822.85" width="28.1" height="13.8" fill="#00a33b"/><line x1="1552.80" y1="857.78" x2="1573.30" y2="857.78" stroke="#e3e3e3" stroke-width="1.6"/><rect x="1576.40" y="850.88" width="28.1" height="13.8" fill="#00a33b"/><line x1="1552.80" y1="885.81" x2="1573.30" y2="885.81" stroke="#e3e3e3" stroke-width="1.6"/><rect x="1576.40" y="878.91" width="28.1" height="13.8" fill="#00a33b"/><line x1="1517.80" y1="913.84" x2="1538.30" y2="913.84" stroke="#e3e3e3" stroke-width="1.6"/><rect x="1541.40" y="906.94" width="28.1" height="13.8" fill="#00a33b"/><line x1="1482.80" y1="941.87" x2="1503.30" y2="941.87" stroke="#e3e3e3" stroke-width="1.6"/><rect x="1506.40" y="934.97" width="28.1" height="13.8" fill="#00a33b"/><circle cx="806.7" cy="72.7" r="16.6" fill="#c3c3c3"/><line x1="798" y1="72.7" x2="815.4" y2="72.7" stroke="#fff" stroke-width="3.4"/><line x1="806.7" y1="64" x2="806.7" y2="81.4" stroke="#fff" stroke-width="3.4"/><circle cx="785.2" cy="409" r="16.6" fill="#c3c3c3"/><line x1="776.5" y1="409" x2="793.9" y2="409" stroke="#fff" stroke-width="3.4"/><line x1="785.2" y1="400.3" x2="785.2" y2="417.7" stroke="#fff" stroke-width="3.4"/><rect x="719.10" y="433.00" width="18.4" height="18.4" rx="2.4" fill="#9a4e96" transform="rotate(45 728.3 442.20)"/><rect x="719.10" y="469.45" width="18.4" height="18.4" rx="2.4" fill="#9a4e96" transform="rotate(45 728.3 478.65)"/><rect x="719.10" y="505.90" width="18.4" height="18.4" rx="2.4" fill="#9a4e96" transform="rotate(45 728.3 515.10)"/><rect x="719.10" y="542.35" width="18.4" height="18.4" rx="2.4" fill="#9a4e96" transform="rotate(45 728.3 551.55)"/><rect x="719.10" y="578.80" width="18.4" height="18.4" rx="2.4" fill="#9a4e96" transform="rotate(45 728.3 588.00)"/><rect x="719.10" y="615.25" width="18.4" height="18.4" rx="2.4" fill="#9a4e96" transform="rotate(45 728.3 624.45)"/><rect x="719.10" y="651.70" width="18.4" height="18.4" rx="2.4" fill="#9a4e96" transform="rotate(45 728.3 660.90)"/><rect x="719.10" y="688.15" width="18.4" height="18.4" rx="2.4" fill="#9a4e96" transform="rotate(45 728.3 697.35)"/><rect x="719.10" y="724.60" width="18.4" height="18.4" rx="2.4" fill="#9a4e96" transform="rotate(45 728.3 733.80)"/><rect x="719.10" y="761.05" width="18.4" height="18.4" rx="2.4" fill="#9a4e96" transform="rotate(45 728.3 770.25)"/><rect x="719.10" y="797.50" width="18.4" height="18.4" rx="2.4" fill="#9a4e96" transform="rotate(45 728.3 806.70)"/><rect x="719.10" y="833.95" width="18.4" height="18.4" rx="2.4" fill="#9a4e96" transform="rotate(45 728.3 843.15)"/><rect x="719.10" y="870.40" width="18.4" height="18.4" rx="2.4" fill="#9a4e96" transform="rotate(45 728.3 879.60)"/><rect x="719.10" y="906.85" width="18.4" height="18.4" rx="2.4" fill="#9a4e96" transform="rotate(45 728.3 916.05)"/><circle cx="33.8" cy="69.3" r="6.7" fill="#6f6f6f"/><circle cx="48.8" cy="84.7" r="6.7" fill="#6f6f6f"/><polyline points="34,70 34,85 48,85" fill="none" stroke="#6f6f6f" stroke-width="3.4"/><line x1="44.6" y1="69.8" x2="56.6" y2="69.8" stroke="#6f6f6f" stroke-width="3.2"/><line x1="50.6" y1="63.8" x2="50.6" y2="75.8" stroke="#6f6f6f" stroke-width="3.2"/><circle cx="88.8" cy="69.3" r="6.7" fill="#6f6f6f"/><circle cx="88.8" cy="84.2" r="6.7" fill="#6f6f6f"/><polyline points="88,69.3 78.9,69.3 78.9,84.2 88,84.2" fill="none" stroke="#6f6f6f" stroke-width="3.3"/><line x1="96" y1="84.7" x2="108" y2="84.7" stroke="#6f6f6f" stroke-width="3.2"/><line x1="102" y1="78.7" x2="102" y2="90.7" stroke="#6f6f6f" stroke-width="3.2"/><circle cx="121.8" cy="76.7" r="1.1" fill="#6f6f6f"/><circle cx="181.5" cy="77" r="1.1" fill="#6f6f6f"/><circle cx="152" cy="78" r="9.8" fill="none" stroke="#6f6f6f" stroke-width="2.8"/><line x1="140.5" y1="66.5" x2="163.8" y2="89.8" stroke="#6f6f6f" stroke-width="2.8" stroke-linecap="round"/><line x1="163.8" y1="66.5" x2="140.5" y2="89.8" stroke="#6f6f6f" stroke-width="2.8" stroke-linecap="round"/><circle cx="212" cy="78" r="10.2" fill="none" stroke="#6f6f6f" stroke-width="2.8"/><line x1="212" y1="67.8" x2="212" y2="72.5" stroke="#6f6f6f" stroke-width="2.6"/><line x1="212" y1="83.5" x2="212" y2="88.2" stroke="#6f6f6f" stroke-width="2.6"/><line x1="201.8" y1="78" x2="206.5" y2="78" stroke="#6f6f6f" stroke-width="2.6"/><line x1="217.5" y1="78" x2="222.2" y2="78" stroke="#6f6f6f" stroke-width="2.6"/><rect x="1440.5" y="69.3" width="16.2" height="7.6" fill="#6f6f6f"/><rect x="1456.7" y="84.5" width="16.7" height="8.1" fill="#6f6f6f"/><polyline points="1449.1,76 1449.1,88.6 1457,88.6" fill="none" stroke="#6f6f6f" stroke-width="4"/><line x1="1459.9" y1="72.8" x2="1471.5" y2="72.8" stroke="#6f6f6f" stroke-width="3"/><line x1="1465.7" y1="67.0" x2="1465.7" y2="78.6" stroke="#6f6f6f" stroke-width="3"/><rect x="1498.3" y="69.3" width="17.3" height="7.6" fill="#6f6f6f"/><rect x="1498.3" y="84.5" width="17.3" height="8.1" fill="#6f6f6f"/><rect x="1494.2" y="69.3" width="4.2" height="23.3" fill="#6f6f6f"/><line x1="1514.7" y1="88.7" x2="1526.3" y2="88.7" stroke="#6f6f6f" stroke-width="3"/><line x1="1520.5" y1="82.9" x2="1520.5" y2="94.5" stroke="#6f6f6f" stroke-width="3"/><circle cx="1541.7" cy="80.4" r="1.1" fill="#6f6f6f"/><circle cx="1604.8" cy="80.4" r="1.1" fill="#6f6f6f"/><rect x="1561.5" y="75.8" width="25" height="12" fill="none" stroke="#6f6f6f" stroke-width="2.8"/><line x1="1561" y1="69.2" x2="1587" y2="95" stroke="#6f6f6f" stroke-width="2.8" stroke-linecap="round"/><line x1="1587" y1="69.2" x2="1561" y2="95" stroke="#6f6f6f" stroke-width="2.8" stroke-linecap="round"/><circle cx="1636.6" cy="81.1" r="10.4" fill="none" stroke="#6f6f6f" stroke-width="2.8"/><line x1="1636.6" y1="70.7" x2="1636.6" y2="75.5" stroke="#6f6f6f" stroke-width="2.6"/><line x1="1636.6" y1="86.7" x2="1636.6" y2="91.5" stroke="#6f6f6f" stroke-width="2.6"/><line x1="1626.2" y1="81.1" x2="1631" y2="81.1" stroke="#6f6f6f" stroke-width="2.6"/><line x1="1642.2" y1="81.1" x2="1647" y2="81.1" stroke="#6f6f6f" stroke-width="2.6"/><polyline points="627.00,68.15 632.30,63.45 637.60,68.15" fill="none" stroke="#fff" stroke-width="2"/><polyline points="627.00,75.15 632.30,79.85 637.60,75.15" fill="none" stroke="#fff" stroke-width="2"/><polyline points="1916.45,71.95 1921.75,67.25 1927.05,71.95" fill="none" stroke="#fff" stroke-width="2"/><polyline points="1916.45,78.95 1921.75,83.65 1927.05,78.95" fill="none" stroke="#fff" stroke-width="2"/><rect x="538.00" y="26.40" width="16.20" height="16.20" fill="none" stroke="#fffbe6" stroke-width="1.8"/><rect x="561.30" y="26.40" width="16.20" height="16.20" fill="none" stroke="#fffbe6" stroke-width="1.8"/><rect x="567.40" y="26.50" width="4" height="16.00" fill="#fffbe6"/><rect x="584.60" y="26.40" width="16.20" height="16.20" fill="none" stroke="#fffbe6" stroke-width="1.8"/><rect x="584.70" y="32.50" width="16.00" height="4" fill="#fffbe6"/><rect x="607.90" y="26.40" width="16.20" height="16.20" fill="none" stroke="#fffbe6" stroke-width="1.8"/><rect x="611.40" y="29.90" width="9.2" height="9.2" fill="#fffbe6"/><rect x="631.20" y="26.40" width="16.20" height="16.20" fill="none" stroke="#fffbe6" stroke-width="1.8"/><line x1="634.70" y1="29.90" x2="643.90" y2="39.10" stroke="#fffbe6" stroke-width="2.6"/><line x1="643.90" y1="29.90" x2="634.70" y2="39.10" stroke="#fffbe6" stroke-width="2.6"/><rect x="1821.90" y="27.30" width="17.20" height="17.20" fill="none" stroke="#fffbe6" stroke-width="1.8"/><rect x="1846.40" y="27.30" width="17.20" height="17.20" fill="none" stroke="#fffbe6" stroke-width="1.8"/><rect x="1853.00" y="27.40" width="4" height="17.00" fill="#fffbe6"/><rect x="1870.90" y="27.30" width="17.20" height="17.20" fill="none" stroke="#fffbe6" stroke-width="1.8"/><rect x="1871.00" y="33.90" width="17.00" height="4" fill="#fffbe6"/><rect x="1895.40" y="27.30" width="17.20" height="17.20" fill="none" stroke="#fffbe6" stroke-width="1.8"/><rect x="1899.40" y="31.30" width="9.2" height="9.2" fill="#fffbe6"/><rect x="1919.90" y="27.30" width="17.20" height="17.20" fill="none" stroke="#fffbe6" stroke-width="1.8"/><line x1="1923.90" y1="31.30" x2="1933.10" y2="40.50" stroke="#fffbe6" stroke-width="2.6"/><line x1="1933.10" y1="31.30" x2="1923.90" y2="40.50" stroke="#fffbe6" stroke-width="2.6"/>
</svg>
<div class="a" style="left:0.00px;top:958.00px;width:1431.20px;height:52.00px;background:#fef4e6;"></div><div class="a" style="left:1420.00px;top:948.60px;width:579.00px;height:61.40px;background:#fef4e6;"></div><div class="t" style="left:737.80px;top:974.15px;font-size:29px;color:#0b0b0b;transform:scaleX(0.9037);-webkit-text-stroke:0.6px #0b0b0b;">ГРАВЮРЫ КАК ФИЗИЧЕСКИЕ ОБЪЕКТЫ</div><div class="t" style="left:1417.20px;top:973.85px;font-size:29px;color:#0b0b0b;transform:scaleX(0.9006);-webkit-text-stroke:0.6px #0b0b0b;">ХАРАКТЕРИСТИКИ ФИЗИЧЕСКИХ ОБЪЕКТОВ</div><div class="a" style="left:0.00px;top:1008.30px;width:1999.00px;height:1.70px;background:#111111;"></div>
</body></html>
